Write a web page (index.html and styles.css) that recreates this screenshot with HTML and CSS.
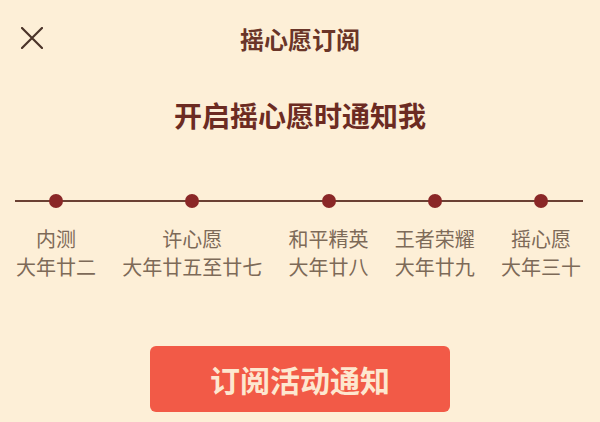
FILE: index.html
```html
<!DOCTYPE html>
<html lang="zh-CN">

<head>
    <meta charset="UTF-8">
    <meta name="viewport" content="width=device-width, initial-scale=1.0">
    <title>摇心愿订阅</title>
    <link rel="stylesheet" href="styles.css">
</head>

<body>
    <div class="header">
        <button class="close-btn" aria-label="关闭">
            <svg width="22" height="22" viewBox="0 0 22 22">
                <path d="M1 1 L21 21 M21 1 L1 21" stroke="#4b3329" stroke-width="2.2" stroke-linecap="round" fill="none" />
            </svg>
        </button>
        <div class="title">摇心愿订阅</div>
        <div></div>
    </div>

    <h1 class="headline">开启摇心愿时通知我</h1>

    <div class="timeline">
        <div class="step">
            <span class="dot"></span>
            <div class="step-name">内测</div>
            <div class="step-date">大年廿二</div>
        </div>
        <div class="step">
            <span class="dot"></span>
            <div class="step-name">许心愿</div>
            <div class="step-date">大年廿五至廿七</div>
        </div>
        <div class="step">
            <span class="dot"></span>
            <div class="step-name">和平精英</div>
            <div class="step-date">大年廿八</div>
        </div>
        <div class="step">
            <span class="dot"></span>
            <div class="step-name">王者荣耀</div>
            <div class="step-date">大年廿九</div>
        </div>
        <div class="step">
            <span class="dot"></span>
            <div class="step-name">摇心愿</div>
            <div class="step-date">大年三十</div>
        </div>
    </div>

    <div class="actions">
        <button class="subscribe">订阅活动通知</button>
    </div>
</body>

</html>
```

FILE: styles.css
```css
body {
    margin: 0;
    background: #fdefd7;
    font-family: "Noto Sans CJK SC", "Noto Sans", sans-serif;
}

.header {
    display: grid;
    grid-template-columns: 1fr auto 1fr;
    align-items: center;
    height: 76px;
}

.close-btn {
    justify-self: start;
    margin-left: 21px;
    padding: 0;
    border: none;
    background: none;
    display: flex;
    cursor: pointer;
}

.title {
    font-size: 24px;
    font-weight: 700;
    color: #6a3528;
}

.headline {
    margin: 19px 0 0;
    text-align: center;
    font-size: 28px;
    line-height: 40px;
    font-weight: 700;
    color: #6c2b22;
}

/* the line runs through the middle of the dots */
.timeline {
    display: flex;
    justify-content: space-between;
    margin: 59px 17px 0 15px;
    padding: 0 2px 0 1px;
    background: linear-gradient(#6b4033, #6b4033) no-repeat 0 6px / 100% 2px;
}

.step {
    display: flex;
    flex-direction: column;
    align-items: center;
    font-size: 20px;
    line-height: 28px;
    color: #7d6a58;
}

.dot {
    width: 14px;
    height: 14px;
    border-radius: 50%;
    background: #8a2727;
    margin-bottom: 17px;
}

.actions {
    display: flex;
    justify-content: center;
    margin-top: 65px;
}

.subscribe {
    width: 300px;
    height: 66px;
    border: none;
    border-radius: 6px;
    background: #f25a47;
    color: #fde7cf;
    font-family: inherit;
    font-size: 30px;
    font-weight: 700;
    cursor: pointer;
}
```
